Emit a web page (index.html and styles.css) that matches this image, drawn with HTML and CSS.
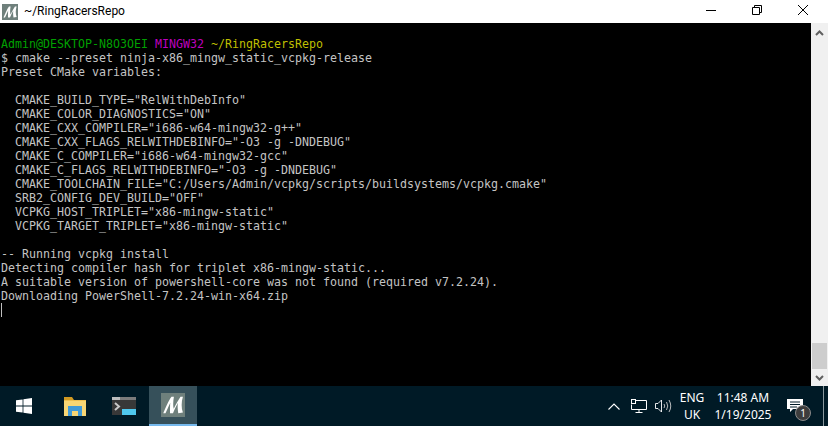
FILE: index.html
```html
<!DOCTYPE html>
<html lang="en">
<head>
<meta charset="utf-8">
<title>~/RingRacersRepo</title>
<link rel="stylesheet" href="styles.css">
</head>
<body>
<div class="window">
  <header class="titlebar">
    <svg class="app-icon" width="16" height="16" viewBox="0 0 16 16"><rect width="16" height="16" fill="#6f807c"/><path d="M1.5 13.5C3 10 5 5 7 2.5L8.6 2.5C8 6 8 9 8.5 10.5C10 7 11.5 5 13 2.5L14.6 2.5C13.5 6 13.5 10 14.6 13L11.5 13.5C11 10 11 8 11.3 6.5C10 9 9 11 8 13.5L6 13.5C6 10 6 8 6.2 6.5C5 9 4 11.5 3 13.5Z" fill="#fff"/></svg>
    <span class="title">~/RingRacersRepo</span>
    <div class="controls">
      <button class="ctl"><svg width="10" height="10" viewBox="0 0 10 10"><path d="M0 5.5H10" stroke="#000"/></svg></button>
      <button class="ctl"><svg width="10" height="10" viewBox="0 0 10 10"><path d="M0.5 2.5H7.5V9.5H0.5ZM2.5 2.5V0.5H9.5V7.5H7.5" fill="none" stroke="#000"/></svg></button>
      <button class="ctl"><svg width="10" height="10" viewBox="0 0 10 10"><path d="M0 0L10 10M10 0L0 10" stroke="#000"/></svg></button>
    </div>
  </header>
  <div class="main">
    <pre class="terminal"><span class="green">Admin@DESKTOP-N8O3OEI</span> <span class="purple">MINGW32</span> <span class="yellow">~/RingRacersRepo</span>
$ cmake --preset ninja-x86_mingw_static_vcpkg-release
Preset CMake variables:

  CMAKE_BUILD_TYPE="RelWithDebInfo"
  CMAKE_COLOR_DIAGNOSTICS="ON"
  CMAKE_CXX_COMPILER="i686-w64-mingw32-g++"
  CMAKE_CXX_FLAGS_RELWITHDEBINFO="-O3 -g -DNDEBUG"
  CMAKE_C_COMPILER="i686-w64-mingw32-gcc"
  CMAKE_C_FLAGS_RELWITHDEBINFO="-O3 -g -DNDEBUG"
  CMAKE_TOOLCHAIN_FILE="C:/Users/Admin/vcpkg/scripts/buildsystems/vcpkg.cmake"
  SRB2_CONFIG_DEV_BUILD="OFF"
  VCPKG_HOST_TRIPLET="x86-mingw-static"
  VCPKG_TARGET_TRIPLET="x86-mingw-static"

-- Running vcpkg install
Detecting compiler hash for triplet x86-mingw-static...
A suitable version of powershell-core was not found (required v7.2.24).
Downloading PowerShell-7.2.24-win-x64.zip
<span class="cursor"></span></pre>
    <div class="scrollbar">
      <svg class="arrow" width="9" height="6" viewBox="0 0 9 6"><path d="M1 5L4.5 1.5L8 5" fill="none" stroke="#606060" stroke-width="2"/></svg>
      <div class="track"><div class="thumb"></div></div>
      <svg class="arrow" width="9" height="6" viewBox="0 0 9 6"><path d="M1 1L4.5 4.5L8 1" fill="none" stroke="#606060" stroke-width="2"/></svg>
    </div>
  </div>
  <footer class="taskbar">
    <div class="task-item start">
      <svg width="16" height="16" viewBox="0 0 16 16"><path d="M0 2.3L6.6 1.4V7.6H0ZM7.4 1.3L16 0V7.6H7.4ZM0 8.4H6.6V14.6L0 13.7ZM7.4 8.4H16V16L7.4 14.7Z" fill="#fff"/></svg>
    </div>
    <div class="task-item">
      <svg width="22" height="19" viewBox="0 0 22 19"><path d="M0 0H8L10 3H0Z" fill="#d29a22"/><rect y="3" width="22" height="16" fill="#f7d674"/><rect y="3" width="22" height="1" fill="#eebf4f"/><path d="M4 9H18V19H14V14H8V19H4Z" fill="#3f9ad8"/></svg>
    </div>
    <div class="task-item">
      <svg width="24" height="18" viewBox="0 0 24 18"><rect width="24" height="18" fill="#383838"/><rect width="8" height="3" fill="#bdbdbd"/><rect x="8" width="16" height="3" fill="#7c7c7c"/><path d="M3 6L7 9.5L3 13" fill="none" stroke="#c8c8c8" stroke-width="2"/><rect x="10" y="12" width="14" height="6" fill="#4fc8ee"/></svg>
    </div>
    <div class="task-item active">
      <svg width="24" height="24" viewBox="0 0 16 16"><rect width="16" height="16" fill="#6f807c"/><path d="M1.5 13.5C3 10 5 5 7 2.5L8.6 2.5C8 6 8 9 8.5 10.5C10 7 11.5 5 13 2.5L14.6 2.5C13.5 6 13.5 10 14.6 13L11.5 13.5C11 10 11 8 11.3 6.5C10 9 9 11 8 13.5L6 13.5C6 10 6 8 6.2 6.5C5 9 4 11.5 3 13.5Z" fill="#fff"/></svg>
    </div>
    <div class="tray">
      <svg class="tray-caret" width="12" height="7" viewBox="0 0 12 7"><path d="M0.5 6.5L6 1L11.5 6.5" fill="none" stroke="#fff" stroke-width="1.1"/></svg>
      <svg class="tray-net" width="16" height="14" viewBox="0 0 16 14"><path d="M4.5 1.5H15.5V10.5H0.5" fill="none" stroke="#fff"/><rect x="0.5" y="0.5" width="4" height="4" fill="#001a26" stroke="#fff"/><path d="M8 10.5V13M4.5 13.5H11.5M0.5 5.5V10.5" fill="none" stroke="#fff"/></svg>
      <svg class="tray-vol" width="17" height="14" viewBox="0 0 17 14"><path d="M0.5 4.5H3L6.5 1V13L3 9.5H0.5Z" fill="none" stroke="#fff" stroke-width="0.9"/><path d="M9 5Q10.5 7 9 9M11.5 3Q14 7 11.5 11M14 1Q17.5 7 14 13" fill="none" stroke="#ccc" stroke-width="0.9"/></svg>
      <div class="lang"><span>ENG</span><span>UK</span></div>
      <div class="clock"><span>11:48 AM</span><span>1/19/2025</span></div>
      <div class="notify">
        <svg width="16" height="13" viewBox="0 0 16 13"><path d="M0 0H16V10H6L3 13V10H0Z" fill="#fff"/><path d="M3 3H13M3 5.5H13M3 8H10" stroke="#001a26"/></svg>
        <span class="badge">1</span>
      </div>
      <div class="show-desktop"></div>
    </div>
  </footer>
</div>
</body>
</html>
```
FILE: styles.css
```css
* { box-sizing: border-box; }
html, body { margin: 0; height: 100%; background: #000; overflow: hidden; }
.window { display: flex; flex-direction: column; height: 426px; width: 828px; }
.titlebar { flex: 0 0 23px; height: 23px; background: #fff; display: flex; align-items: center; padding-left: 2px; color: #000; }
.app-icon { margin-right: 6px; }
.title { font: 12px/23px Roboto, sans-serif; }
.controls { margin-left: auto; display: flex; padding-right: 2px; }
.ctl { width: 46px; height: 23px; padding: 0 0 3px; border: 0; background: transparent; display: flex; align-items: center; justify-content: center; }
.ctl svg { display: block; }
.main { flex: 1; display: flex; min-height: 0; }
.terminal { flex: 1; margin: 0; padding: 14px 0 0 1px; background: #000; color: #c4c4c4; font: 11.63px/14px "DejaVu Sans Mono", monospace; overflow: hidden; }
.green { color: #00a000; }
.purple { color: #bf00bf; }
.yellow { color: #bfbf00; }
.cursor { display: inline-block; width: 1px; height: 14px; background: #bfbfbf; vertical-align: top; }
.scrollbar { flex: 0 0 17px; background: #f0f0f0; display: flex; flex-direction: column; align-items: center; padding: 7px 0 5px; }
.track { flex: 1; width: 100%; display: flex; flex-direction: column; justify-content: flex-end; padding: 0 1px 6px; }
.thumb { height: 26px; background: #cdcdcd; }
.arrow { display: block; }
.taskbar { flex: 0 0 40px; height: 40px; background: #001a26; display: flex; align-items: stretch; color: #fff; font: 12px/1 "Noto Sans", sans-serif; }
.task-item { width: 48px; margin-right: 1px; display: flex; align-items: center; justify-content: center; }
.task-item.start { margin-right: 3px; }
.task-item.active { background: #36505a; border-bottom: 2px solid #76b9ed; margin-right: 0; }
.tray { margin-left: auto; display: flex; align-items: center; }
.tray-caret { display: block; margin-right: 11px; }
.tray-net { display: block; margin-right: 8px; }
.tray-vol { display: block; margin-right: 4px; }
.lang, .clock { display: flex; flex-direction: column; align-items: center; gap: 1px; line-height: 16px; }
.lang { width: 32px; margin-right: 5px; }
.clock { width: 60px; margin-right: 8px; }
.notify { position: relative; width: 30px; height: 40px; padding: 0 2px 2px 0; display: flex; align-items: center; justify-content: center; }
.badge { position: absolute; right: 0; top: 19px; width: 16px; height: 16px; border-radius: 50%; background: #3d3d3d; border: 1px solid #8a8a8a; color: #fff; font-size: 10px; line-height: 14px; text-align: center; }
.show-desktop { width: 5px; height: 40px; margin-left: 12px; border-left: 1px solid #8a989e; }
```
